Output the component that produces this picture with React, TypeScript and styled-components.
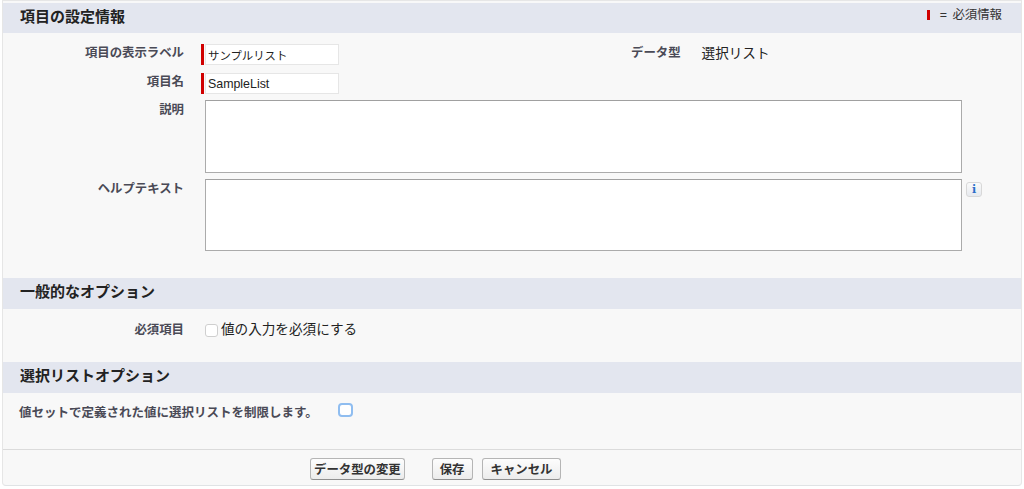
import React from 'react';
import styled, { createGlobalStyle } from 'styled-components';

const FONT = '"Liberation Sans", "Noto Sans CJK JP", sans-serif';

const GlobalStyle = createGlobalStyle`
  html, body {
    margin: 0;
    padding: 0;
    background: #fff;
    font-family: ${FONT};
  }
`;

const Panel = styled.div`
  box-sizing: border-box;
  width: 1020px;
  height: 486px;
  margin-left: 2px;
  padding-top: 2px;
  background: #f8f8f8;
  border: 1px solid #e6e6e6;
  border-bottom-color: #e0e3e5;
  border-radius: 0 0 4px 4px;
  display: flex;
  flex-direction: column;
`;

const SectionHeader = styled.div<{ $height?: number }>`
  box-sizing: border-box;
  height: ${(p) => p.$height ?? 31}px;
  padding: 0 19px 0 17px;
  background: #e3e6ef;
  display: flex;
  align-items: flex-start;
  justify-content: space-between;
  flex-shrink: 0;
`;

const SectionTitle = styled.h3`
  margin: 4px 0 0;
  font-size: 15px;
  line-height: 20px;
  font-weight: 700;
  color: #222;
`;

const Legend = styled.div`
  margin-top: 4px;
  display: flex;
  align-items: center;
  font-size: 12.4px;
  line-height: 16px;
  word-spacing: 2px;
  color: #333;
`;

const LegendBar = styled.span`
  width: 3px;
  height: 10px;
  margin-right: 10px;
  background: #d00000;
`;

const Row = styled.div<{ $height: number; $pad?: number }>`
  box-sizing: border-box;
  height: ${(p) => p.$height}px;
  padding-top: ${(p) => p.$pad ?? 0}px;
  display: flex;
  align-items: flex-start;
  flex-shrink: 0;
`;

const Label = styled.label<{ $top?: number }>`
  box-sizing: border-box;
  width: 181px;
  padding-top: ${(p) => p.$top ?? 0}px;
  text-align: right;
  font-size: 12.4px;
  line-height: 16px;
  font-weight: 700;
  color: #4a4a56;
  flex-shrink: 0;
`;

const RequiredField = styled.div`
  margin-left: 17px;
  display: flex;
  align-items: center;
`;

const RequiredBar = styled.span`
  width: 3px;
  height: 21px;
  margin-right: 1px;
  background: #d00000;
`;

const TextInput = styled.input<{ $size: number }>`
  box-sizing: border-box;
  width: 134px;
  height: 21px;
  padding: 1px 2px 0 2px;
  background: #fff;
  border: 1px solid #e6e6e6;
  font-family: ${FONT};
  font-size: ${(p) => p.$size}px;
  color: #222;
  outline: none;
`;

const TextArea = styled.textarea<{ $height: number }>`
  box-sizing: border-box;
  display: block;
  width: 757px;
  height: ${(p) => p.$height}px;
  margin: 0 0 0 21px;
  background: #fff;
  border: 1px solid #ababab;
  border-top-color: #a0a0a0;
  resize: none;
  outline: none;
`;

const TypeLabel = styled(Label)`
  width: auto;
  margin-left: 292px;
`;

const TypeValue = styled.div`
  margin-left: 21px;
  padding-top: 1px;
  font-size: 13.6px;
  line-height: 18px;
  color: #222;
`;

const InfoButton = styled.span`
  box-sizing: border-box;
  width: 16px;
  height: 15px;
  margin: 3px 0 0 4px;
  display: flex;
  align-items: center;
  justify-content: center;
  background: linear-gradient(#fafafa, #e6e9ee);
  border: 1px solid #d8d8d8;
  border-radius: 3px;
  color: #2a6fc9;
  font-family: "DejaVu Serif", serif;
  font-size: 11px;
  font-weight: 700;
  line-height: 1;
`;

const CheckBox = styled.input.attrs({ type: 'checkbox' })`
  appearance: none;
  box-sizing: border-box;
  width: 13px;
  height: 13px;
  margin: 0;
  background: #fff;
  border: 1px solid #cfcfcf;
  border-radius: 3px;
  flex-shrink: 0;
`;

const CheckWrap = styled.div`
  margin-left: 21px;
  padding-top: 1px;
  display: flex;
  align-items: center;
  gap: 3px;
  font-size: 13.6px;
  line-height: 18px;
  color: #222;
`;

const FocusedCheck = styled(CheckBox)`
  width: 15px;
  height: 14px;
  margin: 0 0 0 20px;
  border: 2px solid #8fbdf0;
  border-radius: 4px;
`;

const WideLabel = styled.label`
  margin: 2px 0 0 16px;
  font-size: 12.5px;
  line-height: 16px;
  font-weight: 700;
  color: #4a4a56;
`;

const Footer = styled.div`
  box-sizing: border-box;
  margin-top: auto;
  height: 36px;
  padding: 8px 0 0 307px;
  border-top: 1px solid #dbdbdb;
  display: flex;
  align-items: flex-start;
`;

const Button = styled.button<{ $left?: number; $pad: number }>`
  box-sizing: border-box;
  height: 22px;
  margin-left: ${(p) => p.$left ?? 0}px;
  padding: 0 ${(p) => p.$pad}px;
  background: linear-gradient(#fdfdfd, #ececec);
  border: 1px solid #b5b5b5;
  border-bottom-color: #8f8f8f;
  border-radius: 3px;
  font-family: ${FONT};
  font-size: 12.4px;
  font-weight: 700;
  color: #333;
  white-space: nowrap;
`;

export default function App() {
  return (
    <>
      <GlobalStyle />
      <Panel>
        <SectionHeader $height={30}>
          <SectionTitle>項目の設定情報</SectionTitle>
          <Legend>
            <LegendBar />= 必須情報
          </Legend>
        </SectionHeader>

        <Row $height={40} $pad={11}>
          <Label $top={1}>項目の表示ラベル</Label>
          <RequiredField>
            <RequiredBar />
            <TextInput $size={11.4} defaultValue="サンプルリスト" />
          </RequiredField>
          <TypeLabel $top={1}>データ型</TypeLabel>
          <TypeValue>選択リスト</TypeValue>
        </Row>
        <Row $height={27}>
          <Label $top={1}>項目名</Label>
          <RequiredField>
            <RequiredBar />
            <TextInput $size={12.4} defaultValue="SampleList" />
          </RequiredField>
        </Row>
        <Row $height={79}>
          <Label $top={2}>説明</Label>
          <TextArea $height={73} />
        </Row>
        <Row $height={99}>
          <Label $top={2}>ヘルプテキスト</Label>
          <TextArea $height={72} />
          <InfoButton>i</InfoButton>
        </Row>

        <SectionHeader>
          <SectionTitle>一般的なオプション</SectionTitle>
        </SectionHeader>
        <Row $height={53} $pad={11}>
          <Label $top={2}>必須項目</Label>
          <CheckWrap>
            <CheckBox />
            値の入力を必須にする
          </CheckWrap>
        </Row>

        <SectionHeader>
          <SectionTitle>選択リストオプション</SectionTitle>
        </SectionHeader>
        <Row $height={40} $pad={10}>
          <WideLabel>値セットで定義された値に選択リストを制限します。</WideLabel>
          <FocusedCheck />
        </Row>

        <Footer>
          <Button $pad={3}>データ型の変更</Button>
          <Button $left={27} $pad={7}>保存</Button>
          <Button $left={9} $pad={8}>キャンセル</Button>
        </Footer>
      </Panel>
    </>
  );
}
